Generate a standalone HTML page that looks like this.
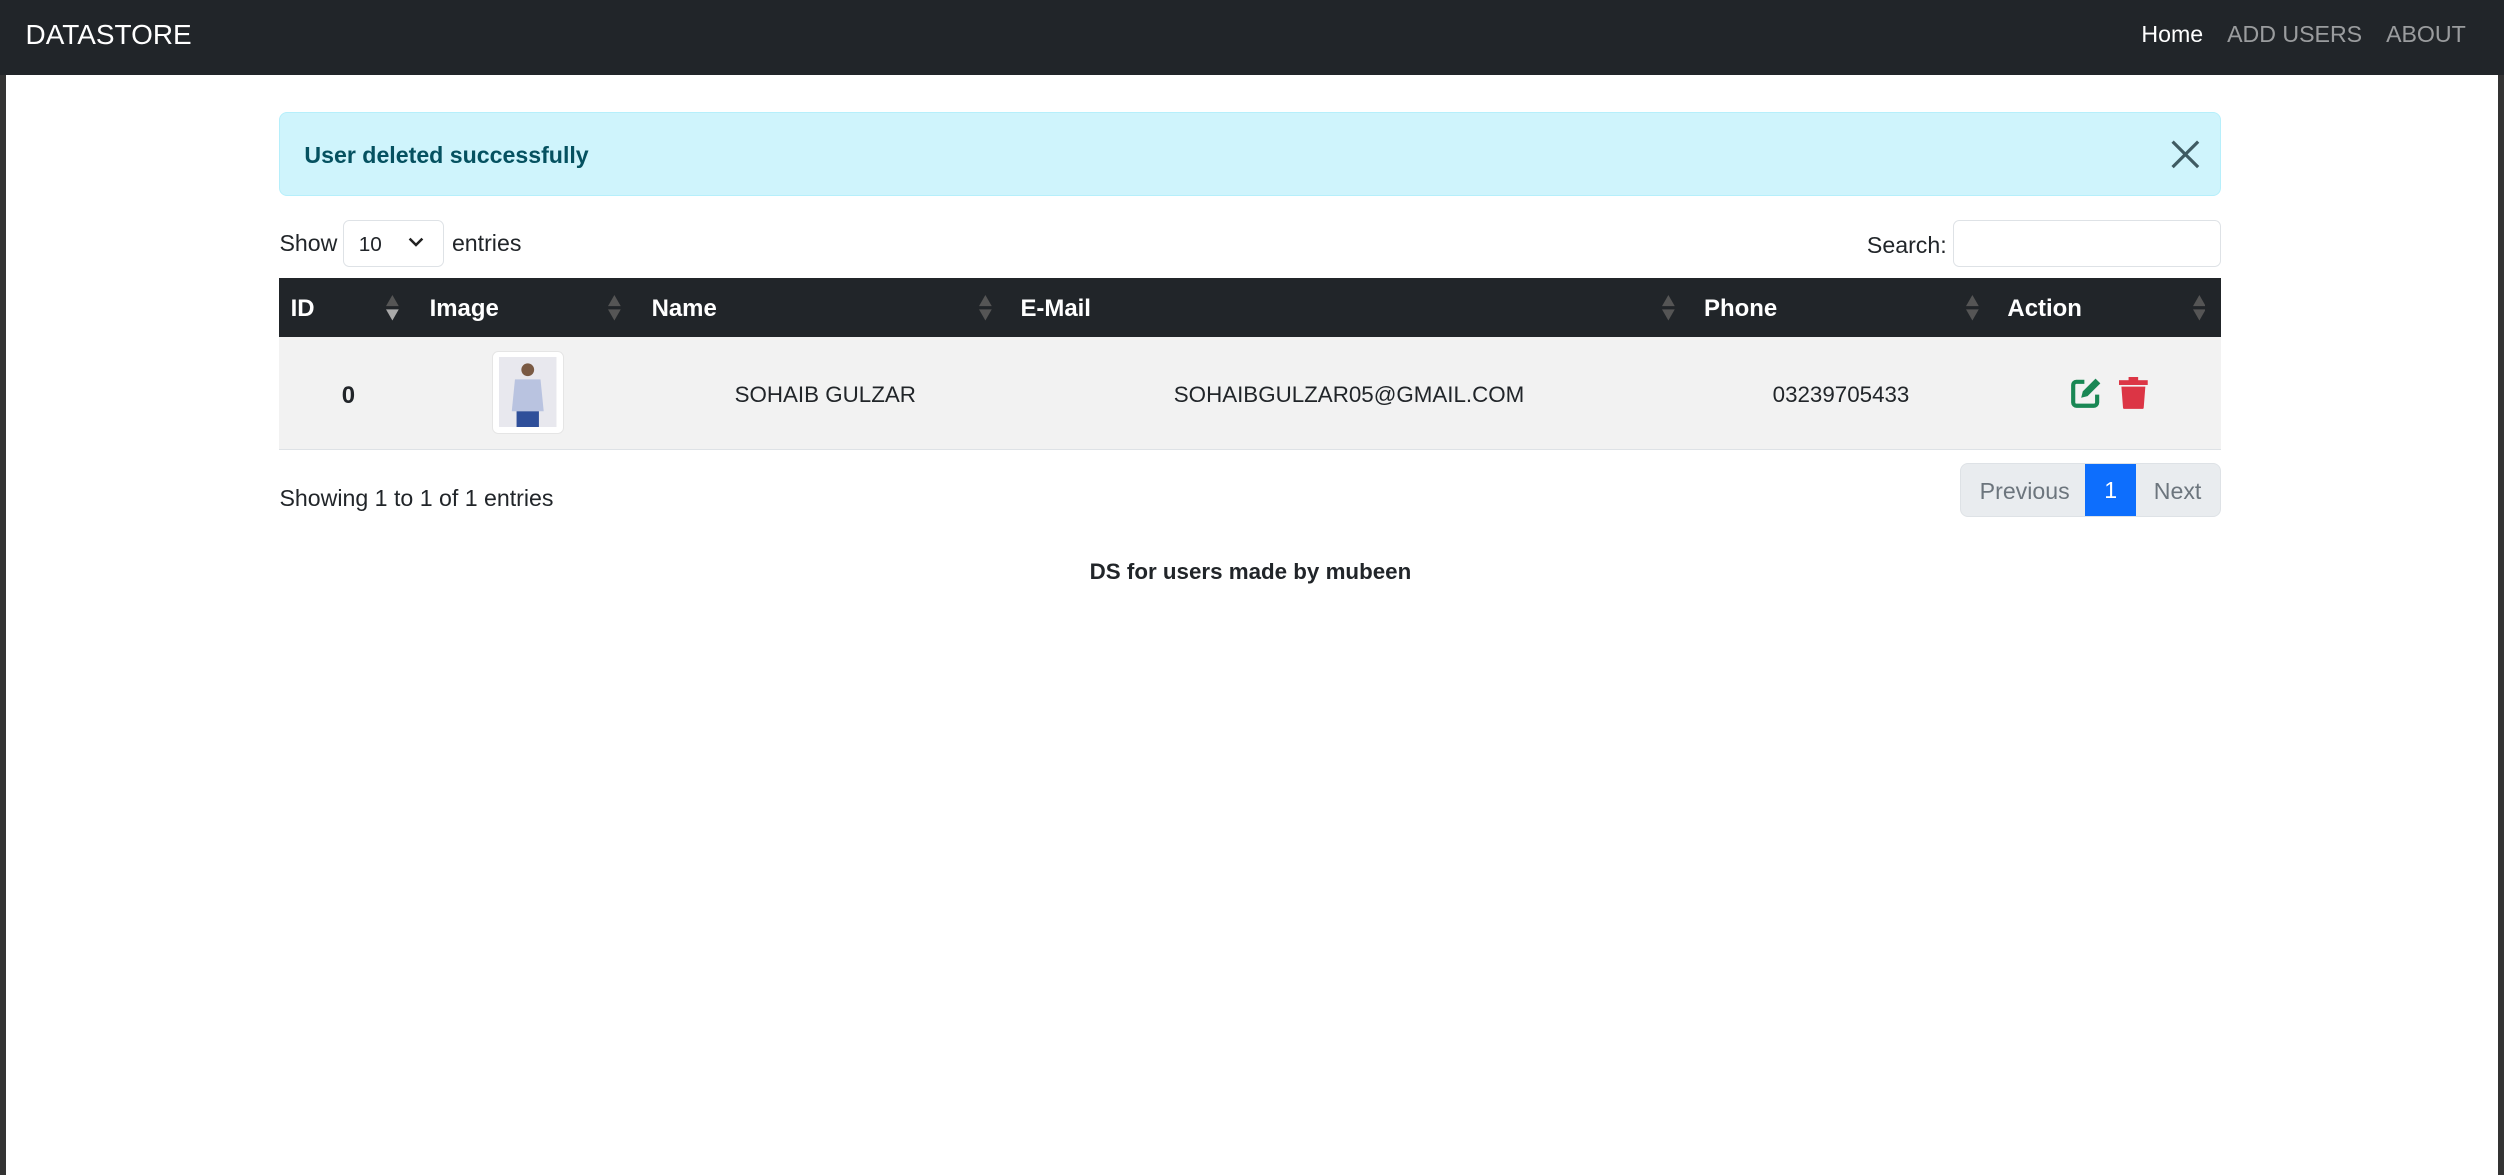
<!DOCTYPE html>
<html><head><meta charset="utf-8"><style>
html{zoom:1.597}
body{margin:0;width:1568px;height:736px;font-family:"Liberation Sans",sans-serif;font-size:14.5px;color:#212529;background:#fff;position:relative;overflow:hidden}
.edge{position:absolute;top:0;bottom:0;width:4px;background:#333}
nav{height:47px;background:#212529;position:relative}
.brand{position:absolute;left:16px;top:12px;color:#fff;font-size:17.5px}
.links{position:absolute;right:24px;top:13px;font-size:14.5px}
.links span{margin-left:15px;color:rgba(255,255,255,.55)}
.links span.a{color:#fff}
.alert{position:absolute;left:175px;top:70px;width:1216px;height:53px;background:#cff4fc;border:1px solid #b6effb;border-radius:5px;box-sizing:border-box}
.alert b{position:absolute;left:15px;top:18px;color:#055160;font-size:14.5px}
.x{position:absolute;right:13px;top:17px}
.abs{position:absolute}
.sel{left:215px;top:138px;width:63px;height:29px;border:1px solid #dee2e6;border-radius:4px;box-sizing:border-box;font-size:13px;padding:7px 0 0 9px}
.inp{left:1223px;top:138px;width:168px;height:29px;border:1px solid #dee2e6;border-radius:4px;box-sizing:border-box}
.th{top:174px;left:175px;width:1216px;height:37px;background:#212529;color:#fff;font-weight:bold;font-size:15px}
.th span{position:absolute;top:11px}
.arr{position:absolute;top:11px;width:8px}
.tr{top:211px;left:175px;width:1216px;height:70px;background:#f2f2f2;border-bottom:1px solid #dee2e6}
.tr span{position:absolute;top:28px;font-size:14px}
.pg{left:1227px;top:290px;height:34px;width:164px;border-radius:5px;overflow:hidden;background:#e9ecef;border:1px solid #dee2e6;box-sizing:border-box}
</style></head><body>
<div class="edge" style="left:0"></div><div class="edge" style="right:0"></div>
<nav><div class="brand">DATASTORE</div><div class="links"><span class="a">Home</span><span>ADD USERS</span><span>ABOUT</span></div></nav>
<div class="alert"><b>User deleted successfully</b>
<svg class="x" width="18" height="18" viewBox="0 0 18 18"><path d="M1 1L17 17M17 1L1 17" stroke="#3f5b62" stroke-width="2"/></svg></div>
<div class="abs" style="left:175px;top:144px">Show</div>
<div class="abs sel">10<svg style="position:absolute;right:12px;top:10px" width="10" height="7" viewBox="0 0 10 7"><path d="M1 1l4 4 4-4" stroke="#222" stroke-width="1.6" fill="none"/></svg></div>
<div class="abs" style="left:283px;top:144px">entries</div>
<div class="abs" style="left:1169px;top:145px">Search:</div>
<div class="abs inp"></div>
<div class="abs th">
<span style="left:7px">ID</span><span style="left:94px">Image</span><span style="left:233px">Name</span><span style="left:464px">E-Mail</span><span style="left:892px">Phone</span><span style="left:1082px">Action</span>
<svg class="arr" style="left:67px" height="16" viewBox="0 0 8 16"><path d="M0 7L4 0 8 7Z" fill="#555"/><path d="M0 9L4 16 8 9Z" fill="#aaa"/></svg>
<svg class="arr" style="left:206px" height="16" viewBox="0 0 8 16"><path d="M0 7L4 0 8 7ZM0 9L4 16 8 9Z" fill="#555"/></svg>
<svg class="arr" style="left:438px" height="16" viewBox="0 0 8 16"><path d="M0 7L4 0 8 7ZM0 9L4 16 8 9Z" fill="#555"/></svg>
<svg class="arr" style="left:866px" height="16" viewBox="0 0 8 16"><path d="M0 7L4 0 8 7ZM0 9L4 16 8 9Z" fill="#555"/></svg>
<svg class="arr" style="left:1056px" height="16" viewBox="0 0 8 16"><path d="M0 7L4 0 8 7ZM0 9L4 16 8 9Z" fill="#555"/></svg>
<svg class="arr" style="left:1198px" height="16" viewBox="0 0 8 16"><path d="M0 7L4 0 8 7ZM0 9L4 16 8 9Z" fill="#555"/></svg>
</div>
<div class="abs tr">
<span style="left:39px;font-weight:bold;font-size:15px">0</span>
<div style="position:absolute;left:133px;top:9px;width:45px;height:52px;background:#fff;border:1px solid #e5e5e5;border-radius:4px;box-sizing:border-box">
<svg style="position:absolute;left:4px;top:3px" width="36" height="44" viewBox="0 0 36 44"><rect width="36" height="44" fill="#e8e8ee"/><circle cx="18" cy="8" r="4" fill="#7a5a44"/><path d="M10 14h16l2 20H8Z" fill="#b9c3e0"/><rect x="11" y="34" width="14" height="10" fill="#2f4f9a"/></svg></div>
<span style="left:285px">SOHAIB GULZAR</span>
<span style="left:560px">SOHAIBGULZAR05@GMAIL.COM</span>
<span style="left:935px">03239705433</span>
<svg style="position:absolute;left:1121px;top:25px" width="20" height="20" viewBox="0 0 20 20"><path d="M9 3H4a2 2 0 0 0-2 2v11a2 2 0 0 0 2 2h11a2 2 0 0 0 2-2v-5" stroke="#198754" stroke-width="2.6" fill="none"/><path d="M16 1l3 3-8 8-4 1 1-4z" fill="#198754"/></svg>
<svg style="position:absolute;left:1152px;top:25px" width="18" height="20" viewBox="0 0 18 20"><rect x="0" y="2" width="18" height="3" fill="#dc3545"/><rect x="6" y="0" width="6" height="3" fill="#dc3545"/><path d="M1.5 6h15l-1 13a1 1 0 0 1-1 1h-11a1 1 0 0 1-1-1z" fill="#dc3545"/></svg>
</div>
<div class="abs" style="left:175px;top:304px">Showing 1 to 1 of 1 entries</div>
<div class="abs pg"><span style="position:absolute;left:12px;top:9px;color:#6c757d">Previous</span><div style="position:absolute;left:78px;top:-1px;width:32px;height:34px;background:#0d6efd;color:#fff;text-align:center;line-height:34px">1</div><span style="position:absolute;left:121px;top:9px;color:#6c757d">Next</span></div>
<div class="abs" style="left:0;width:1566px;text-align:center;top:350px;font-weight:bold;font-size:14px">DS for users made by mubeen</div>
</body></html>
